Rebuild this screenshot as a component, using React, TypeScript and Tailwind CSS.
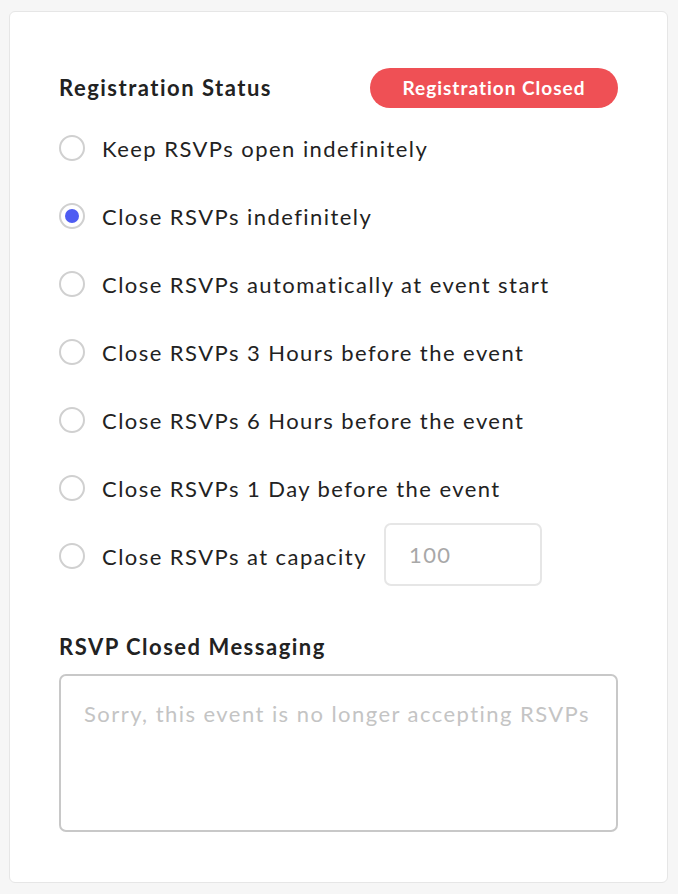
import React from "react";

const options = [
  "Keep RSVPs open indefinitely",
  "Close RSVPs indefinitely",
  "Close RSVPs automatically at event start",
  "Close RSVPs 3 Hours before the event",
  "Close RSVPs 6 Hours before the event",
  "Close RSVPs 1 Day before the event",
];

function Radio({ checked }: { checked?: boolean }) {
  return (
    <span className="flex h-[26px] w-[26px] shrink-0 items-center justify-center rounded-full border-2 border-[#d0d0d0] bg-white">
      {checked && <span className="h-[14px] w-[14px] rounded-full bg-[#4e5cf2]" />}
    </span>
  );
}

export default function App() {
  return (
    <div
      className="min-h-[894px] w-[678px] bg-[#f6f6f6] pt-[11px] pl-[9px]"
      style={{ fontFamily: "Lato, 'Noto Sans', sans-serif" }}
    >
      <div className="h-[872px] w-[659px] rounded-[6px] border border-[#e6e6e6] bg-white pl-[49px] pr-[49px] pt-[56px]">
        <div className="flex items-center justify-between pr-0">
          <h2 className="-mt-[2px] text-[22px] font-bold tracking-[1.5px] text-[#222]">Registration Status</h2>
          <span className="flex h-[40px] w-[248px] items-center justify-center rounded-full bg-[#ef5055] text-[19px] font-bold tracking-[1px] text-white">
            Registration Closed
          </span>
        </div>
        <div className="mt-[6px] flex flex-col text-[22px] tracking-[1.45px] text-[#222]">
          {options.map((o, i) => (
            <label key={o} className="flex h-[68px] items-center gap-[17px]">
              <Radio checked={i === 1} />
              <span>{o}</span>
            </label>
          ))}
          <label className="flex h-[68px] items-center">
            <Radio />
            <span className="ml-[17px]">Close RSVPs at capacity</span>
            <input
              placeholder="100"
              className="-mt-[4px] ml-[17px] h-[63px] w-[158px] rounded-[7px] border-2 border-[#e6e6e6] px-[23px] text-[22px] tracking-[1.45px] text-[#222] outline-none placeholder:text-[#a8a8a8]"
            />
          </label>
        </div>
        <h3 className="mt-[40px] text-[22px] font-bold tracking-[1.5px] text-[#222]">RSVP Closed Messaging</h3>
        <textarea
          placeholder="Sorry, this event is no longer accepting RSVPs"
          className="mt-[11px] block h-[158px] w-[559px] resize-none rounded-[7px] border-2 border-[#c8c8c8] px-[23px] pt-[21px] text-[22px] tracking-[1.45px] text-[#222] outline-none placeholder:text-[#c4c4c4]"
        />
      </div>
    </div>
  );
}
